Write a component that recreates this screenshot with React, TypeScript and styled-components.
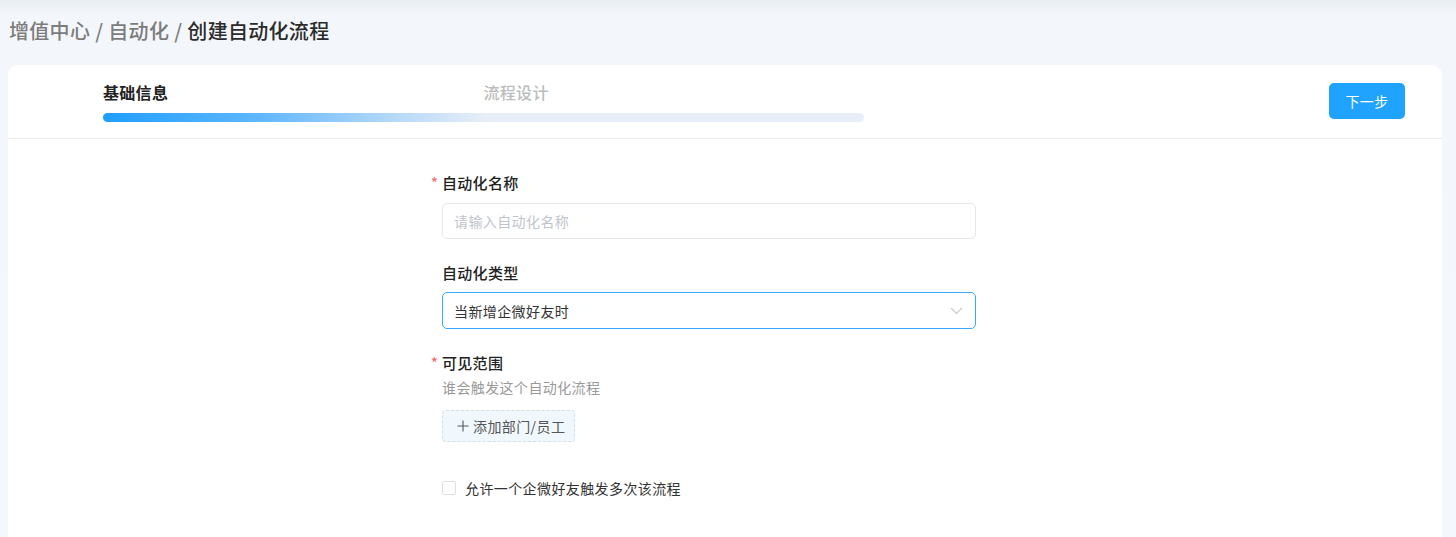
import React from "react";
import styled, { createGlobalStyle } from "styled-components";

const GlobalStyle = createGlobalStyle`
  html, body {
    margin: 0;
    padding: 0;
    background: #f3f7fb;
  }
  body {
    font-family: "Noto Sans CJK SC", "Noto Sans", "Liberation Sans", sans-serif;
    color: #333;
    overflow: hidden;
  }
  * { box-sizing: border-box; }
`;

const Page = styled.div`
  min-height: 537px;
  padding: 17px 14px 0 8px;
  background: linear-gradient(#e8edf2 0px, #f3f7fb 16px, #f4f8fc 100%);
`;

const Breadcrumb = styled.div`
  display: flex;
  align-items: center;
  height: 28px;
  padding-left: 1px;
  font-size: 20px;
  font-weight: 500;
  line-height: 28px;
  letter-spacing: 0.3px;
`;

const Crumb = styled.span<{ $current?: boolean }>`
  color: ${(p) => (p.$current ? "#2b2b2b" : "#7c7c7c")};
`;

const Sep = styled.span`
  color: #7c7c7c;
  margin: 0 5px;
`;

const Card = styled.div`
  margin-top: 20px;
  background: #fff;
  border-radius: 10px 10px 0 0;
  min-height: 480px;
`;

const Header = styled.div`
  display: flex;
  align-items: center;
  justify-content: space-between;
  padding: 15px 37px 16px 95px;
  border-bottom: 1px solid #e9edf2;
`;

const Steps = styled.div`
  display: flex;
  flex-direction: column;
  width: 761px;
`;

const StepLabels = styled.div`
  display: flex;
  height: 24px;
`;

const StepLabel = styled.div<{ $active?: boolean }>`
  width: 381px;
  font-size: 16px;
  line-height: 24px;
  letter-spacing: 0.3px;
  font-weight: ${(p) => (p.$active ? 600 : 500)};
  color: ${(p) => (p.$active ? "#222" : "#bcbcbc")};
`;

const Bar = styled.div`
  margin-top: 9px;
  height: 9px;
  border-radius: 5px;
  background: linear-gradient(
    90deg,
    #1f9eff 0%,
    #5db6ff 20%,
    #b4d8f8 38%,
    #e6eef8 50%,
    #e8eef7 100%
  );
`;

const PrimaryButton = styled.button`
  width: 76px;
  height: 36px;
  border: none;
  border-radius: 5px;
  background: #1fa3ff;
  color: #fff;
  font-family: inherit;
  font-size: 14px;
  letter-spacing: 0.4px;
  cursor: pointer;
`;

const Form = styled.div`
  display: flex;
  flex-direction: column;
  width: 534px;
  margin-left: 434px;
  padding-top: 32px;
`;

const Label = styled.div<{ $gap?: number }>`
  display: flex;
  align-items: center;
  height: 22px;
  margin-top: ${(p) => p.$gap ?? 0}px;
  font-size: 15px;
  font-weight: 500;
  letter-spacing: 0.3px;
  color: #222;
`;

const Required = styled.span`
  width: 11px;
  margin-left: -11px;
  color: #f56c6c;
  font-size: 14px;
  font-weight: 500;
`;

const Input = styled.input`
  margin-top: 10px;
  height: 36px;
  width: 100%;
  border: 1px solid #e4e7ec;
  border-radius: 5px;
  padding: 0 11px;
  font-family: inherit;
  font-size: 14px;
  letter-spacing: 0.4px;
  color: #333;
  outline: none;
  &::placeholder {
    color: #c0c4cc;
  }
`;

const Select = styled.div`
  margin-top: 9px;
  height: 37px;
  display: flex;
  align-items: center;
  justify-content: space-between;
  border: 1px solid #3aa7ff;
  border-radius: 5px;
  padding: 0 12px 0 11px;
  font-size: 14px;
  letter-spacing: 0.4px;
  color: #333;
`;

const Desc = styled.div`
  margin-top: 3px;
  font-size: 14px;
  line-height: 22px;
  letter-spacing: 0.4px;
  color: #999;
`;

const DashedButton = styled.button`
  margin-top: 12px;
  align-self: flex-start;
  width: 133px;
  height: 32px;
  display: flex;
  align-items: center;
  gap: 4px;
  padding: 0 0 0 14px;
  border: 1px dashed #cfe0ec;
  border-radius: 4px;
  background: #f1f8fd;
  font-family: inherit;
  font-size: 14px;
  letter-spacing: 0.4px;
  color: #555;
  cursor: pointer;
`;

const CheckRow = styled.label`
  margin-top: 35px;
  display: flex;
  align-items: center;
  height: 22px;
  gap: 9px;
  font-size: 14px;
  letter-spacing: 0.4px;
  color: #333;
`;

const CheckBox = styled.span`
  width: 14px;
  height: 14px;
  border: 1px solid #dcdfe6;
  border-radius: 2px;
  background: #fff;
`;

const Chevron = () => (
  <svg width="13" height="8" viewBox="0 0 13 8" fill="none">
    <path d="M1 1l5.5 5.5L12 1" stroke="#c6c9cf" strokeWidth="1.1" />
  </svg>
);

const Plus = () => (
  <svg width="12" height="12" viewBox="0 0 12 12" fill="none">
    <path d="M6 0.5v11M0.5 6h11" stroke="#555" strokeWidth="1.1" />
  </svg>
);

export default function App() {
  return (
    <>
      <GlobalStyle />
      <Page>
        <Breadcrumb>
          <Crumb>增值中心</Crumb>
          <Sep>/</Sep>
          <Crumb>自动化</Crumb>
          <Sep>/</Sep>
          <Crumb $current>创建自动化流程</Crumb>
        </Breadcrumb>
        <Card>
          <Header>
            <Steps>
              <StepLabels>
                <StepLabel $active>基础信息</StepLabel>
                <StepLabel>流程设计</StepLabel>
              </StepLabels>
              <Bar />
            </Steps>
            <PrimaryButton>下一步</PrimaryButton>
          </Header>
          <Form>
            <Label>
              <Required>*</Required>自动化名称
            </Label>
            <Input placeholder="请输入自动化名称" />
            <Label $gap={22}>自动化类型</Label>
            <Select>
              <span>当新增企微好友时</span>
              <Chevron />
            </Select>
            <Label $gap={22}>
              <Required>*</Required>可见范围
            </Label>
            <Desc>谁会触发这个自动化流程</Desc>
            <DashedButton>
              <Plus />
              添加部门/员工
            </DashedButton>
            <CheckRow>
              <CheckBox />
              允许一个企微好友触发多次该流程
            </CheckRow>
          </Form>
        </Card>
      </Page>
    </>
  );
}
